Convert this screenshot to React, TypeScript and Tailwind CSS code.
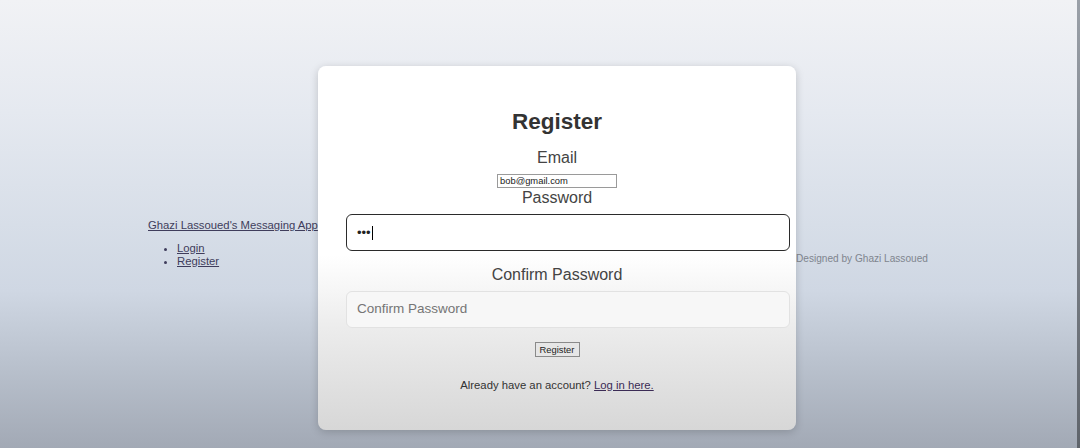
import React from "react";

const font = { fontFamily: '"Liberation Sans", Arial, sans-serif' };

export default function App() {
  return (
    <div
      style={font}
      className="relative h-[448px] w-full overflow-hidden bg-[linear-gradient(180deg,#f1f2f5_0%,#e5e9f0_25%,#d7dee8_50%,#cfd7e3_65%,#bbc3cf_80%,#a2a9b5_100%)]"
    >
      <div className="flex h-full justify-center items-start">
        {/* Header */}
        <div className="w-[170px] mt-[217px] whitespace-nowrap text-[11.3px] text-[#3f3d5c]">
          <a href="#" className="block leading-4 underline">
            Ghazi Lassoued's Messaging App
          </a>
          <ul className="mt-[9px] list-disc pl-[29px] leading-[13px]">
            <li>
              <a href="#" className="underline">Login</a>
            </li>
            <li>
              <a href="#" className="underline">Register</a>
            </li>
          </ul>
        </div>

        {/* Card */}
        <div className="relative mt-[66px] flex h-[364px] w-[478px] flex-col items-center rounded-lg bg-[linear-gradient(180deg,#ffffff_0%,#ffffff_52%,#ececec_72%,#d7d7d7_100%)] px-7 pt-[42px] shadow-[0_2px_8px_rgba(0,0,0,0.18)]">
          <h1 className="text-[22.5px] font-bold leading-7 text-[#333]">Register</h1>

          <label className="mt-[12px] text-[16px] leading-5 text-[#444]">Email</label>
          <div className="mt-[6px] flex h-[14px] w-[120px] items-center border border-[#9a9a9a] bg-white px-[2px] text-[9.4px] text-[#222]">
            bob@gmail.com
          </div>

          <label className="text-[16px] leading-5 text-[#444]">Password</label>
          <div className="mt-[6px] flex h-[37px] w-[444px] shrink-0 items-center self-start rounded-md border border-[#2b2b2b] bg-white px-[10px]">
            <span className="text-[13px] leading-none text-[#222]">•••</span>
            <span className="ml-px h-[14px] w-px bg-black" />
          </div>

          <label className="mt-[14px] text-[16px] leading-5 text-[#444]">Confirm Password</label>
          <div className="mt-[6px] flex h-[37px] w-[444px] shrink-0 items-center self-start rounded-md border border-[#e2e2e2] bg-[#f7f7f7] px-[10px] text-[13.5px] text-[#757575]">
            Confirm Password
          </div>

          <button className="mt-[14px] h-[15px] w-[45px] border border-[#8a8a8a] bg-[#e6e6e6] text-[9.4px] leading-[13px] text-[#222]">
            Register
          </button>

          <p className="mt-[21px] text-[11.3px] leading-[14px] text-[#333]">
            Already have an account?{" "}
            <a href="#" className="text-[#3b2b55] underline">Log in here.</a>
          </p>
        </div>

        {/* Footer */}
        <div className="mt-[253px] w-[136px] whitespace-nowrap text-[10.1px] leading-3 text-[#80858e]">
          Designed by Ghazi Lassoued
        </div>
      </div>
      <div className="absolute right-0 top-0 h-full w-[3px] bg-[linear-gradient(180deg,#9aa0a8,#5f646b)]" />
    </div>
  );
}
